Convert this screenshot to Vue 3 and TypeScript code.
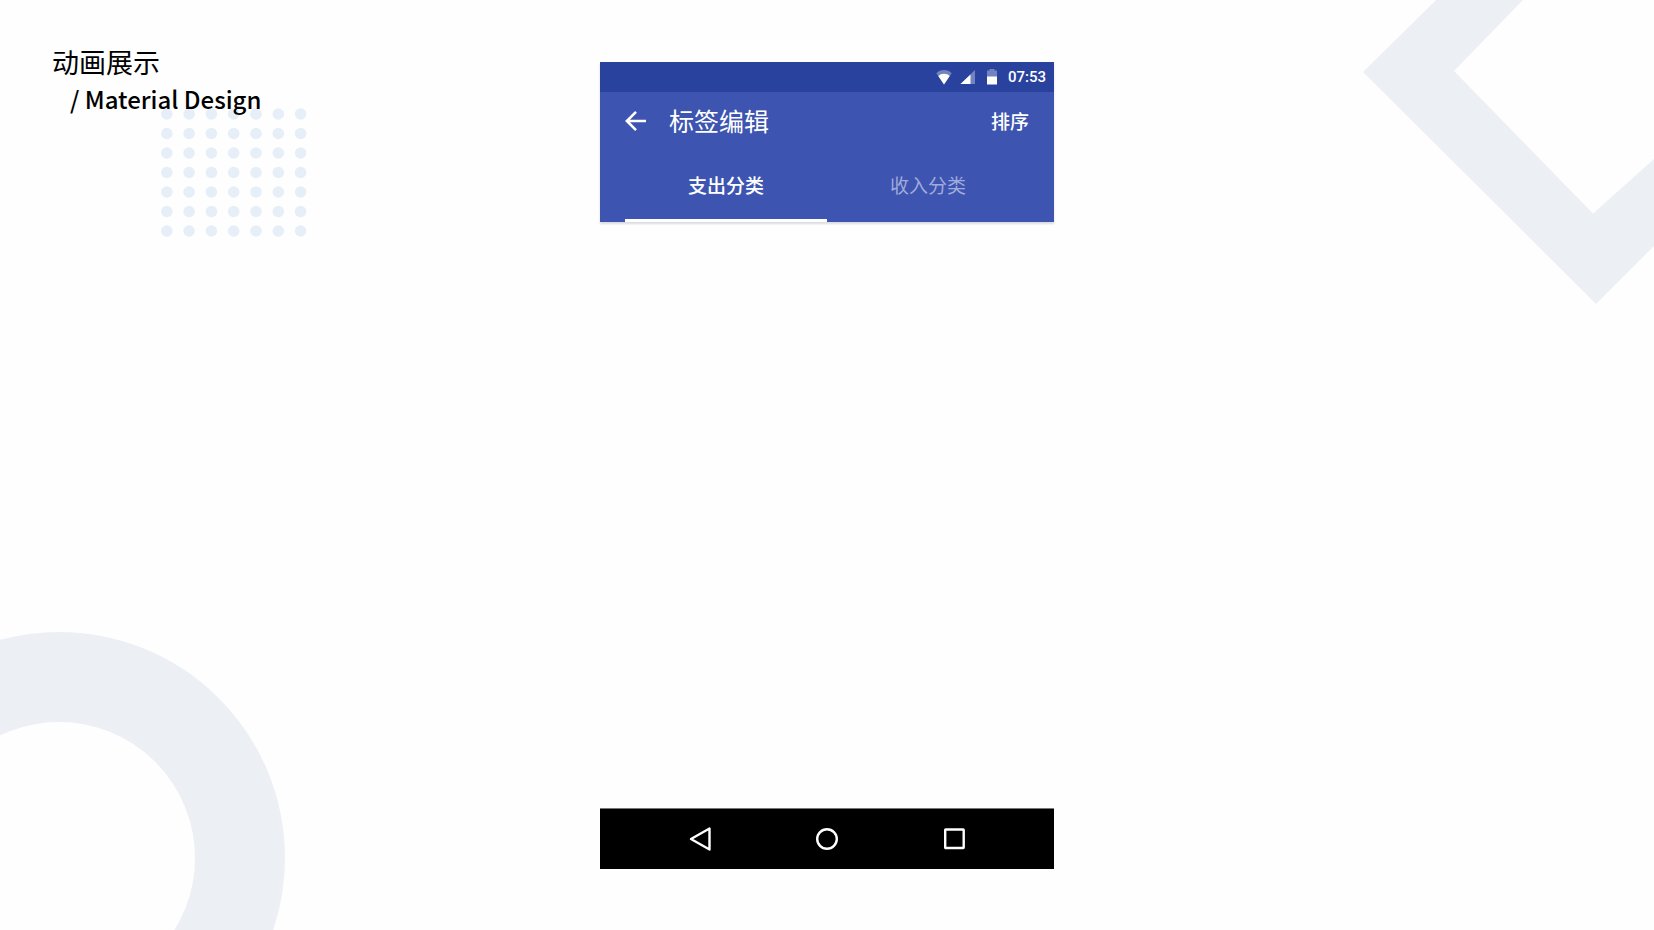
<script setup lang="ts">
import { ref } from 'vue'

interface Tab {
  id: string
  label: string
}

const tabs: Tab[] = [
  { id: 'expense', label: '支出分类' },
  { id: 'income', label: '收入分类' },
]
const activeTab = ref<string>('expense')

const dots = Array.from({ length: 49 }, (_, i) => ({
  x: 5.8 + (i % 7) * 22.3,
  y: 6 + Math.floor(i / 7) * 19.5,
}))
</script>

<template>
  <div class="page">
    <svg class="deco diamond" viewBox="0 0 291 304" aria-hidden="true">
      <path d="M73 0 0 72 233 304 291 246V159L230 213.500 91 71 160 0Z" />
    </svg>
    <svg class="deco ring" viewBox="0 0 286 298" aria-hidden="true">
      <circle cx="59" cy="226" r="181" />
    </svg>
    <svg class="deco dots" viewBox="0 0 146 130" aria-hidden="true">
      <circle v-for="(dot, i) in dots" :key="i" :cx="dot.x" :cy="dot.y" r="5.8" />
    </svg>

    <h1 class="heading">
      <span>动画展示</span>
      <span class="heading-sub">/ Material Design</span>
    </h1>

    <main class="phone">
      <header class="top">
        <div class="status">
          <svg class="status-icon" viewBox="0 0 16 16" aria-hidden="true">
            <path class="faint" d="M8 15.500.3 4.200C2.500 2.200 5 1 8 1s5.500 1.200 7.700 3.200Z" />
            <path d="M8 15.500 2.300 7C3.900 5.500 5.800 4.700 8 4.700s4.100.8 5.700 2.300Z" />
          </svg>
          <svg class="status-icon" viewBox="0 0 16 16" aria-hidden="true">
            <path class="faint" d="M15 1v14H.5Z" />
            <path d="M10.500 5.400V15H.5Z" />
          </svg>
          <svg class="status-icon" viewBox="0 0 16 16" aria-hidden="true">
            <path class="faint" d="M5.500 0h5v1.500H13V8H3V1.500h2.500Z" />
            <path d="M3 7.500h10V15q0 .5-.5.5h-9Q3 15.500 3 15Z" />
          </svg>
          <time>07:53</time>
        </div>
        <div class="appbar">
          <button class="back" type="button" aria-label="返回">
            <svg viewBox="0 0 22 22" aria-hidden="true">
              <path d="M21 11H2.500M11 1.800 1.800 11l9.200 9.200" />
            </svg>
          </button>
          <h2 class="title">标签编辑</h2>
          <button class="sort" type="button">排序</button>
        </div>
        <div class="tabs" role="tablist">
          <button
            v-for="tab in tabs"
            :key="tab.id"
            class="tab"
            :class="{ active: tab.id === activeTab }"
            type="button"
            role="tab"
            :aria-selected="tab.id === activeTab"
            @click="activeTab = tab.id"
          >
            {{ tab.label }}
          </button>
        </div>
      </header>

      <section class="content"></section>

      <nav class="navbar">
        <button type="button" aria-label="后退">
          <svg viewBox="0 0 26 26" aria-hidden="true">
            <path d="M4 13 22.500 2.500v21Z" />
          </svg>
        </button>
        <button type="button" aria-label="主屏幕">
          <svg viewBox="0 0 26 26" aria-hidden="true">
            <circle cx="13" cy="13" r="9.800" />
          </svg>
        </button>
        <button type="button" aria-label="最近任务">
          <svg viewBox="0 0 26 26" aria-hidden="true">
            <rect x="4.200" y="3.500" width="18.500" height="18.500" rx="0.500" />
          </svg>
        </button>
      </nav>
    </main>
  </div>
</template>

<style>
body {
  margin: 0;
  background: #fefefe;
}
</style>

<style scoped>
.page {
  position: relative;
  box-sizing: border-box;
  min-height: 100vh;
  overflow: hidden;
  display: grid;
  grid-template-columns: 1fr minmax(0, 454px) 1fr;
  background: #fefefe;
  font-family: "Noto Sans CJK SC", sans-serif;
}

.deco {
  position: absolute;
  fill: #ecf0f5;
}

.diamond {
  top: 0;
  right: 0;
  width: 291px;
  height: 304px;
}

.ring {
  left: 0;
  bottom: 0;
  width: 286px;
  height: 298px;
}

.ring circle {
  fill: none;
  stroke: #ecf0f5;
  stroke-width: 90;
}

.dots {
  top: 108px;
  left: 161px;
  width: 146px;
  height: 130px;
  fill: #e6eff8;
}

.heading {
  position: relative;
  display: flex;
  flex-direction: column;
  margin: 0;
  padding: 43px 0 0 52px;
  font-size: 27px;
  line-height: 37px;
  font-weight: 400;
  color: #000;
}

.heading-sub {
  padding-left: 18px;
  font-size: 24px;
  font-weight: 500;
}

.phone {
  position: relative;
  grid-column: 2;
  display: flex;
  flex-direction: column;
  margin: 62px 0 61px;
}

.top {
  background: #3d54b0;
  color: #fff;
  box-shadow: 0 2px 2px #d9dbe0;
}

.status {
  display: flex;
  align-items: center;
  justify-content: flex-end;
  gap: 8px;
  height: 30px;
  padding-right: 8px;
  background: #29429d;
}

.status-icon {
  width: 16px;
  height: 16px;
  fill: #fff;
}

.status-icon .faint {
  fill: #7383c0;
}

.status time {
  font: 500 15px/30px Roboto, sans-serif;
}

.appbar {
  display: flex;
  align-items: center;
  height: 58px;
  padding: 0 25px;
}

button {
  padding: 0;
  border: 0;
  background: none;
  color: inherit;
  font-family: inherit;
  cursor: pointer;
}

.back {
  display: flex;
}

.back svg {
  width: 22px;
  height: 22px;
  fill: none;
  stroke: #fff;
  stroke-width: 2.600;
}

.title {
  flex: 1;
  margin: 0 0 0 22px;
  padding-bottom: 2px;
  font-size: 25px;
  line-height: 36px;
  font-weight: 400;
}

.sort {
  padding-bottom: 2px;
  font-size: 19px;
  font-weight: 500;
}

.tabs {
  display: flex;
  height: 72px;
  padding: 0 25px;
}

.tab {
  flex: 1;
  border-bottom: 3px solid transparent;
  font-size: 19px;
  font-weight: 400;
  color: #a0abdb;
}

.tab.active {
  border-color: #fff;
  font-weight: 500;
  color: #fff;
}

.content {
  flex: 1;
}

.navbar {
  box-sizing: border-box;
  display: flex;
  justify-content: center;
  height: 61px;
  border-top: 1px solid #777;
  background: #000;
}

.navbar button {
  display: flex;
  align-items: center;
  justify-content: center;
  width: 28%;
}

.navbar svg {
  width: 26px;
  height: 26px;
  fill: none;
  stroke: #fff;
  stroke-width: 2.400;
  stroke-linejoin: round;
}
</style>
